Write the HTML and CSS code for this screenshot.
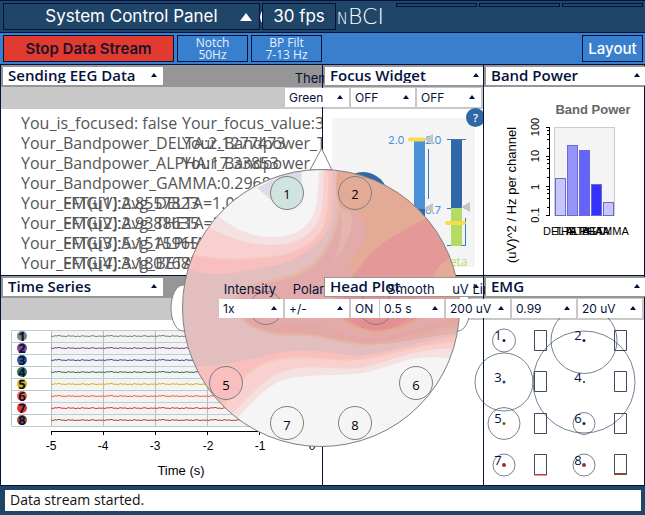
FILE: index.html
```html
<!DOCTYPE html>
<html lang="en">
<head>
<meta charset="utf-8">
<title>OpenBCI</title>
<link rel="stylesheet" href="styles.css">
</head>
<body>
<header class="topbar">
  <div class="logo">
    <svg class="logo-mark" width="22" height="22" viewBox="0 0 22 22"><circle cx="11" cy="11" r="9" /><circle cx="11" cy="11" r="4" /></svg>
    <span>OpenBCI</span>
  </div>
  <button class="btn btn-panel">System Control Panel<span class="tri"></span></button>
  <button class="btn btn-fps">30 fps</button>
  <div class="slots">
    <button class="slot" aria-label="Issues"></button>
    <button class="slot" aria-label="Shop"></button>
    <button class="slot" aria-label="Help"></button>
  </div>
</header>
<nav class="toolbar">
  <button class="btn btn-stop">Stop Data Stream</button>
  <button class="btn btn-filter">Notch<br>50Hz</button>
  <button class="btn btn-filter">BP Filt<br>7-13 Hz</button>
  <button class="btn btn-layout">Layout</button>
</nav>

<main class="dashboard">
  <section class="widget">
    <div class="bar"></div>
    <div class="bar bar-light"></div>
    <label class="title pick"><select aria-label="Widget"><option>Sending EEG Data</option></select></label>
    <div class="stream">
      <span class="a">You_is_focused: false</span><span class="b">Your_focus_value:3.1</span>
      <span class="a">Your_Bandpower_DELTA:2.1277473</span><span class="b">Your_Bandpower_THETA:26.1</span>
      <span class="a">Your_Bandpower_ALPHA:17.33853</span><span class="b">Your_Bandpower_BETA:1.2</span>
      <span class="a">Your_Bandpower_GAMMA:0.29681</span>
      <span class="a">Your_EMG[1]:2.8557823</span><span class="a sub">FFT(uV):Avg_DELTA=1.02</span>
      <span class="a">Your_EMG[2]:2.9388635</span><span class="a sub">FFT(uV):Avg_THETA=3.4</span>
      <span class="a">Your_EMG[3]:5.1515965</span><span class="a sub">FFT(uV):Avg_ALPHA=2.8</span>
      <span class="a">Your_EMG[4]:3.1807687</span><span class="a sub">FFT(uV):Avg_BETA=0.7</span>
    </div>
  </section>

  <section class="widget">
    <div class="bar"></div>
    <div class="bar bar-light"></div>
    <div class="controls">
      <label class="control pick"><span>Theme</span><select><option>Green</option></select></label>
      <label class="control pick"><span></span><select aria-label="Keyboard"><option>OFF</option></select></label>
      <label class="control pick"><span></span><select aria-label="Sound"><option>OFF</option></select></label>
    </div>
    <label class="title pick"><select aria-label="Widget"><option>Focus Widget</option></select></label>
    <svg class="plot focus" viewBox="323 109 160 166">
      <rect x="332" y="118" width="143" height="149" fill="#f4f4f4"/>
      <circle cx="363" cy="197" r="25" fill="#2f68a6"/>
      <rect x="414" y="140" width="11" height="69" fill="#4a90d9"/>
      <rect x="414" y="209" width="11" height="37" fill="#2f68a6"/>
      <rect x="451" y="139" width="11" height="69" fill="#2f68a6"/>
      <rect x="451" y="208" width="11" height="38" fill="#b4dc64"/>
      <g class="rule"><path d="M428.500 149v50M447 139.500h19M447 208.500h4M447 245.500h4M465.500 218v27.500h-4"/></g>
      <g class="focus-num"><text x="388" y="144">2.0</text><text x="425" y="144">2.0</text><text x="425" y="214">0.7</text></g>
      <path class="thumb" d="M410 139.500h13M447 223h17"/>
      <path fill="#c4c4c4" d="M424 139l9-5v10zM424 208l9-5v10zM461 207l9-5v10z"/>
      <text class="focus-beta" x="442" y="266">Beta</text>
    </svg>
    <button class="help" aria-label="Help">?</button>
  </section>

  <section class="widget">
    <div class="bar"></div>
    <label class="title pick"><select aria-label="Widget"><option>Band Power</option></select></label>
    <svg class="plot bands" viewBox="484 87 160 188">
      <text class="chart-title" x="593" y="114">Band Power</text>
      <rect x="554.500" y="127.500" width="60" height="88" fill="#f4f4f4" stroke="#ccc"/>
      <g stroke="#6a6ad8">
        <rect x="555.500" y="178.500" width="10" height="37" fill="#c6c6f8"/>
        <rect x="567.500" y="145.500" width="10" height="70" fill="#9494f9"/>
        <rect x="579.500" y="150.500" width="10" height="65" fill="#6464fb"/>
        <rect x="591.500" y="184.500" width="10" height="31" fill="#3333fb"/>
        <rect x="603.500" y="202.500" width="10" height="13" fill="#c6c6f8"/>
      </g>
      <path class="axis" d="M549.500 127v89M546 127.500h4M546 156.500h4M546 186.500h4M546 215.500h4M547 130.500h2M547 134.500h2M547 139.500h2M547 148.500h2M547 159.500h2M547 163.500h2M547 168.500h2M547 177.500h2M547 189.500h2M547 193.500h2M547 198.500h2M547 207.500h2"/>
      <g class="tick">
        <text transform="translate(539 127) rotate(-90)">100</text>
        <text transform="translate(539 156) rotate(-90)">10</text>
        <text transform="translate(539 187) rotate(-90)">1</text>
        <text transform="translate(539 215) rotate(-90)">0.1</text>
      </g>
      <text class="axis-name" transform="translate(516 195) rotate(-90)">(uV)^2 / Hz per channel</text>
      <g class="tick band-name">
        <text x="560" y="235">DELTA</text><text x="572" y="235">THETA</text><text x="584" y="235">ALPHA</text><text x="596" y="235">BETA</text><text x="608" y="235">GAMMA</text>
      </g>
    </svg>
  </section>

  <section class="widget">
    <div class="bar"></div>
    <div class="bar bar-light"></div>
    <label class="title pick"><select aria-label="Widget"><option>Time Series</option></select></label>
    <svg class="plot series" viewBox="1 320 321 165">
      <defs>
        <path id="seg" d="M0 0l2 .5 2-.8 2 .3 2-.6 3 .9 2-.2 2 .5 2-.9 3 .5 2-.3 3 .7 2-.6 2 .6 2-1 3 .7 2-.2 2 .4 3-.8 2 .2 2 .7 3-.6 2 .3 2-.3"/>
        <g id="wave"><use href="#seg"/><use href="#seg" x="52"/><use href="#seg" x="104"/><use href="#seg" x="156"/><use href="#seg" x="208"/></g>
      </defs>
      <rect x="51" y="330" width="261" height="96" fill="#f3f3f3"/>
      <path stroke="#bbb" d="M51.500 330v96M103.500 330v96M155.500 330v96M207.500 330v96M259.500 330v96M311.500 330v96"/>
      <path stroke="#bccad2" fill="none" d="M11.500 330.500h300M11.500 342.500h300M11.500 354.500h300M11.500 366.500h300M11.500 378.500h300M11.500 390.500h300M11.500 402.500h300M11.500 414.500h300M11.500 426.500h300M11.500 330v96"/>
      <g class="waves">
        <use href="#wave" x="51" y="336" stroke="#818181"/>
        <use href="#wave" x="51" y="348" stroke="#7c4b8d"/>
        <use href="#wave" x="51" y="360" stroke="#365798"/>
        <use href="#wave" x="51" y="372" stroke="#31715a"/>
        <use href="#wave" x="51" y="384" stroke="#ddb20d"/>
        <use href="#wave" x="51" y="396" stroke="#fd5e34"/>
        <use href="#wave" x="51" y="408" stroke="#e03830"/>
        <use href="#wave" x="51" y="420" stroke="#a25031"/>
      </g>
      <circle cx="22" cy="336" r="5" fill="#818181"/><circle cx="22" cy="348" r="5" fill="#7c4b8d"/>
      <circle cx="22" cy="360" r="5" fill="#365798"/><circle cx="22" cy="372" r="5" fill="#31715a"/>
      <circle cx="22" cy="384" r="5" fill="#ddb20d"/><circle cx="22" cy="396" r="5" fill="#fd5e34"/>
      <circle cx="22" cy="408" r="5" fill="#e03830"/><circle cx="22" cy="420" r="5" fill="#a25031"/>
      <g class="chan">
        <text x="22" y="341">1</text><text x="22" y="353">2</text><text x="22" y="365">3</text><text x="22" y="377">4</text>
        <text x="22" y="389">5</text><text x="22" y="401">6</text><text x="22" y="413">7</text><text x="22" y="425">8</text>
      </g>
      <path class="axis" d="M51 431.500h261M51.500 431v4M103.500 431v4M155.500 431v4M207.500 431v4M259.500 431v4M311.500 431v4"/>
      <g class="time-tick">
        <text x="51" y="450">-5</text><text x="103" y="450">-4</text><text x="155" y="450">-3</text><text x="208" y="450">-2</text><text x="260" y="450">-1</text><text x="312" y="450">0</text>
      </g>
      <text class="time-name" x="181" y="475">Time (s)</text>
    </svg>
  </section>

  <section class="widget">
    <div class="bar"></div>
    <div class="bar bar-light"></div>
    <svg class="head" width="300" height="310" viewBox="0 0 300 310">
      <defs><clipPath id="scalp"><circle cx="453" cy="489" r="415"/></clipPath></defs>
      <g class="outline">
        <path fill="#fff" d="M140 25l11.500-21.500L162 25z"/>
        <ellipse fill="#fff" cx="13" cy="163" rx="12" ry="23"/><ellipse fill="#fff" cx="288" cy="163" rx="12" ry="23"/>
      </g>
      <g transform="scale(.33333)"><g clip-path="url(#scalp)">
        <rect width="900" height="930" fill="#e3bebf"/>
        <path fill="#e3aaaa" stroke="#e5b9aa" stroke-width="10" d="M504 60C508 180 512 240 462 318C410 396 340 398 260 416C190 440 180 480 210 510C240 555 300 570 380 568C460 568 500 592 590 598C700 592 780 556 920 530V60z"/>
        <path fill="#e5b6ac" d="M510 190C540 190 555 210 540 260C525 310 500 340 490 345C515 300 518 250 510 190z"/>
        <path fill="#e3ab96" d="M506 60C490 130 500 190 525 195C570 190 590 220 585 265C575 310 545 340 520 375L560 370L760 220L700 60z"/>
        <path fill="#e3a6a0" d="M230 500C300 560 360 540 440 535C500 560 560 585 640 580C720 560 780 535 920 505V560C760 570 700 600 590 598C500 592 460 568 380 568C300 570 240 555 210 510z" opacity=".6"/>
        <path fill="#e49898" stroke="#e3ab96" stroke-width="8" d="M765 216C680 265 620 290 580 345C555 385 535 395 510 425C480 460 480 500 510 520C560 560 620 575 700 545C760 515 810 490 900 475V216z"/>
        <path fill="#e48f92" d="M520 450C520 530 580 565 640 555C710 540 740 500 740 450z"/>
        <path fill="#e3ab96" d="M790 398C800 360 825 345 850 335L880 400z"/>

        <path fill="#f9bfbf" d="M0 350C100 400 170 390 240 375C350 365 440 320 475 250C495 200 488 120 488 60H0z"/>
        <path fill="#f8d0d0" stroke="#f5c8b8" stroke-width="5" d="M0 310C90 340 170 350 250 340C350 340 440 305 463 240C480 180 476 120 476 60H0z"/>
        <path fill="#f5e1e1" d="M60 215C160 275 220 300 310 300C390 298 440 260 453 200C463 140 460 100 461 60H60z"/>
        <path fill="#f5f5f5" d="M120 195C200 260 260 280 320 276C390 272 425 235 438 185C446 140 447 100 447 60H120z"/>
        <path fill="#dcdce9" d="M262 128L395 60V145L310 172z"/>

        <path fill="#f9bfbf" d="M40 665C150 665 210 650 280 633C400 600 480 625 560 632C680 625 740 580 900 568V930H40z"/>
        <path fill="#f8d0d0" stroke="#f5c8b8" stroke-width="5" d="M120 830C180 770 205 700 250 672C330 620 430 640 530 645C660 640 730 592 900 585V940H120z"/>
        <path fill="#f5e1e1" d="M150 840C220 780 250 730 310 692C380 655 450 672 560 670C660 655 730 600 900 612V930H150z"/>
        <path fill="#f5f5f5" d="M170 855C240 780 270 740 330 708C400 685 480 695 580 684C680 665 730 610 900 652V930H170z"/>
      </g></g>
      <g class="outline">
        <circle fill="none" cx="151" cy="163" r="138.500"/>
        <circle fill="#cfe3df" cx="117" cy="48" r="16.500"/><circle fill="#e3ab96" cx="185" cy="48" r="16.500"/>
        <circle fill="none" cx="96" cy="163" r="16.500"/><circle fill="none" cx="206" cy="163" r="16.500"/>
        <circle fill="#f9bfbf" cx="56" cy="238" r="16.500"/><circle fill="#f5f5f5" cx="246" cy="238" r="16.500"/>
        <circle fill="#f5f5f5" cx="117" cy="278" r="16.500"/><circle fill="#f5f5f5" cx="185" cy="278" r="16.500"/>
      </g>
      <g class="electrode">
        <text x="117" y="54">1</text><text x="185" y="54">2</text><text x="56" y="245">5</text><text x="246" y="245">6</text><text x="117" y="285">7</text><text x="185" y="285">8</text>
      </g>
    </svg>
    <div class="controls">
      <label class="control pick"><span>Intensity</span><select><option>1x</option></select></label>
      <label class="control pick"><span>Polarity</span><select><option>+/-</option></select></label>
      <label class="control pick"><span>Contours</span><select><option>ON</option></select></label>
      <label class="control pick"><span></span><select aria-label="Smoothing"><option>0.9</option></select></label>
    </div>
    <label class="title pick"><select aria-label="Widget"><option>Head Plot</option></select></label>
  </section>

  <section class="widget">
    <div class="bar"></div>
    <div class="bar bar-light"></div>
    <svg class="plot emg" viewBox="484 320 160 165">
      <g fill="none" stroke="#3d4a5e" stroke-width=".7">
        <circle cx="504" cy="340.500" r="11.500"/><circle cx="584" cy="340.500" r="33"/>
        <circle cx="504" cy="382" r="29"/><circle cx="584" cy="382" r="51"/>
        <circle cx="504" cy="423.500" r="16"/><circle cx="584" cy="423.500" r="11"/>
        <circle cx="504" cy="465" r="11"/><circle cx="584" cy="465" r="11"/>
      </g>
      <path fill="none" stroke="#3d4a5e" d="M534.500 330.500h12v20h-12zM614.500 330.500h12v20h-12zM534.500 371.500h12v20h-12zM614.500 371.500h12v20h-12zM534.500 413.500h12v20h-12zM614.500 413.500h12v20h-12zM534.500 454.500h12v20h-12zM614.500 454.500h12v20h-12z"/>
      <path fill="#c03a3a" d="M534 474h13v1.500h-13z"/><path fill="#8a4636" d="M614 473h13v2h-13z"/>
      <g fill="#1c2440">
        <circle cx="504" cy="340.500" r="1.500"/><circle cx="584" cy="340.500" r="1.500"/><circle cx="504" cy="382" r="1.500" fill="#2b4477"/><circle cx="584" cy="382" r="1"/>
        <circle cx="504" cy="423.500" r="1.500" fill="#6e5a20"/><circle cx="584" cy="423.500" r="1.500"/><circle cx="504" cy="465" r="2" fill="#9e2b2b"/><circle cx="584" cy="465" r="2" fill="#8f3a2b"/>
      </g>
      <g class="emg-num">
        <text x="498" y="340">1</text><text x="578" y="340">2</text><text x="498" y="382">3</text><text x="578" y="382">4</text>
        <text x="498" y="423">5</text><text x="578" y="423">6</text><text x="498" y="465">7</text><text x="578" y="465">8</text>
      </g>
    </svg>
    <div class="controls">
      <label class="control pick"><span>Smooth</span><select><option>0.5 s</option></select></label>
      <label class="control pick"><span>uV Limit</span><select><option>200 uV</option></select></label>
      <label class="control pick"><span>Creep</span><select><option>0.99</option></select></label>
      <label class="control pick"><span>Min uV</span><select><option>20 uV</option></select></label>
    </div>
    <label class="title pick"><select aria-label="Widget"><option>EMG</option></select></label>
  </section>
</main>

<footer class="status"><div class="message" role="status">Data stream started.</div></footer>
</body>
</html>
```
FILE: styles.css
```css
* { box-sizing: border-box; }

:root {
  --ink: #03123a;
  --navy: #1f4569;
  --blue: #3880cd;
  --ui: Inter, "Open Sans", sans-serif;
  --body: "Open Sans", "Noto Sans", sans-serif;
  --chart: "Liberation Sans", Arial, sans-serif;
}

body {
  margin: 0;
  min-height: 100vh;
  display: flex;
  flex-direction: column;
  background: var(--navy);
  font-family: var(--ui);
  color: var(--ink);
  overflow-x: hidden;
}

button, select { font: inherit; color: inherit; margin: 0; padding: 0; }

.topbar, .toolbar { display: flex; gap: 2px; padding: 2px 2px 2px 3px; }
.topbar {
  position: relative;
  border-top: 1px solid var(--ink);
  border-bottom: 1px solid var(--ink);
  background: var(--navy);
}
.toolbar { background: var(--blue); gap: 3px; }

.btn {
  height: 27px;
  padding: 0;
  border: 1px solid var(--ink);
  background: var(--navy);
  color: #fff;
  text-align: center;
}
.topbar .btn { position: relative; font-size: 17px; line-height: 25px; }
.btn-panel { width: 257px; }
.tri {
  position: absolute;
  right: 7px;
  top: 9px;
  border: 6px solid transparent;
  border-top: 0;
  border-bottom: 8px solid #fff;
}
.btn-fps { width: 74px; }
.btn-stop { width: 171px; background: #e13a30; color: #1d1226; font-size: 15px; font-weight: 600; }
.btn-filter { width: 71px; background: var(--blue); color: #e6efff; font: 12px/12px var(--body); }
.btn-layout { width: 61px; margin-left: auto; background: var(--blue); font-size: 15px; font-weight: 500; }

.logo {
  position: absolute;
  left: 259px;
  top: 4px;
  display: flex;
  gap: 20px;
  align-items: center;
  font: 200 22px/24px "DejaVu Sans", sans-serif;
  font-variant-caps: small-caps;
  color: #fff;
}
.logo-mark { fill: none; stroke: #fff; stroke-width: 2; }
.slots { display: flex; gap: 2px; margin-left: auto; }
.slot { width: 81px; height: 4px; border: 1px solid var(--ink); background: var(--navy); }

.dashboard {
  flex: 1;
  display: grid;
  grid-template-columns: 2fr 1fr 1fr;
  grid-template-rows: auto auto;
  border-right: 1px solid var(--ink);
  border-bottom: 1px solid var(--ink);
  background: #fff;
}
.widget {
  position: relative;
  min-width: 0;
  border-left: 1px solid var(--ink);
  border-top: 1px solid var(--ink);
  background: #fff;
}
.bar { height: 22px; background: #969696; }
.bar-light { background: #c8c8c8; }

.pick::after {
  content: "";
  position: absolute;
  right: 6px;
  bottom: 8px;
  border: 3px solid transparent;
  border-top: 0;
  border-bottom: 4px solid var(--ink);
  pointer-events: none;
}
.pick select {
  display: block;
  width: 100%;
  appearance: none;
  border: 0;
  border-radius: 0;
  background: #fff;
}
.title { position: absolute; left: 2px; top: 2px; width: 160px; }
.title select {
  height: 18px;
  padding: 0 0 2px 5px;
  font: 600 15px/16px var(--body);
  box-shadow: 0 0 0 1px #969696;
}

.controls {
  position: absolute;
  right: 0;
  top: 4px;
  display: flex;
}
.control { position: relative; flex: none; width: 66px; font-size: 12px; text-align: center; }
.control span { display: block; height: 19px; padding-right: 4px; font-size: 13px; line-height: 19px; white-space: nowrap; }
.control select {
  height: 19px;
  padding-left: 4px;
  border-right: 2px solid #c8c8c8;
  box-shadow: -1px 0 #c8c8c8;
  line-height: 19px;
}
.control::after { right: 8px; }

.plot { display: block; width: 100%; height: auto; overflow: visible; }

.stream {
  display: grid;
  grid-template-columns: 161px 1fr;
  grid-auto-rows: 20px;
  height: 166px;
  padding: 4px 0 0 20px;
  overflow: hidden;
  font: 16px/20px var(--body);
  color: #555;
  white-space: nowrap;
}
.stream .a { grid-column: 1; }
.stream .b { grid-column: 2; }
.stream .sub { padding-left: 42px; }
.stream span:nth-child(-n+2) { grid-row: 1; }
.stream span:nth-child(n+3):nth-child(-n+4) { grid-row: 2; }
.stream span:nth-child(n+5):nth-child(-n+6) { grid-row: 3; }
.stream span:nth-child(7) { grid-row: 4; }
.stream span:nth-child(n+8):nth-child(-n+9) { grid-row: 5; }
.stream span:nth-child(n+10):nth-child(-n+11) { grid-row: 6; }
.stream span:nth-child(n+12):nth-child(-n+13) { grid-row: 7; }
.stream span:nth-child(n+14) { grid-row: 8; }

.rule { fill: none; stroke: #3b78ba; }
.thumb { stroke: #f7dc4c; stroke-width: 4; stroke-linecap: round; }
.focus-num { font: 11px var(--ui); fill: #4a90d9; }
.focus-beta { font: 12px var(--body); fill: #b4dc64; }
.help {
  position: absolute;
  right: -2px;
  top: 43px;
  width: 19px;
  height: 19px;
  border: 0;
  border-radius: 50%;
  background: #2f68a6;
  color: #fff;
  font: 600 11px/19px var(--body);
}

.axis { fill: none; stroke: #000; }
.chart-title { font: bold 13px var(--chart); fill: #666; text-anchor: middle; }
.axis-name { font: 13px var(--chart); text-anchor: middle; }
.tick { font: 11px var(--chart); text-anchor: middle; }
.waves { fill: none; stroke-width: 1; }
.chan { font: bold 13px var(--body); fill: var(--ink); text-anchor: middle; }
.time-tick { font: 12px var(--chart); text-anchor: middle; }
.time-name { font: 13px var(--chart); text-anchor: middle; }

.head { position: absolute; left: -153px; top: -131px; }
.outline { stroke: #808080; stroke-width: 1; }
.electrode { font: 13px var(--body); fill: #000; text-anchor: middle; }
.emg-num { font: 13px var(--body); fill: var(--ink); text-anchor: middle; }

.status { padding: 4px 4px 4px 5px; background: var(--navy); }
.message { height: 21px; padding-left: 5px; background: #fff; color: #111; font: 14px/20px var(--body); }
```
